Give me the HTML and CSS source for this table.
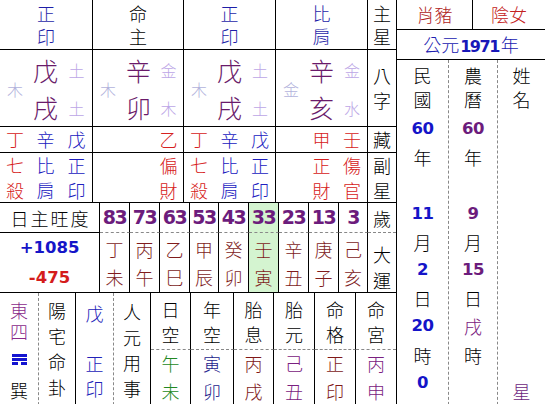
FILE: index.html
```html
<!DOCTYPE html>
<html lang="zh-Hant">
<head>
<meta charset="utf-8">
<title>八字命盤</title>
<link rel="stylesheet" href="styles.css">
</head>
<body>
<div class="chart">
  <div class="main">
    <div class="pillars">
      <div class="cell head navy">正<br>印</div>
      <div class="cell head">命<br>主</div>
      <div class="cell head navy">正<br>印</div>
      <div class="cell head navy">比<br>肩</div>
      <div class="cell head last">主<br>星</div>

      <div class="cell bazi">
        <span class="el-left">木</span>
        <span class="stem">戊</span><span class="el">土</span>
        <span class="stem b">戌</span><span class="el b">土</span>
      </div>
      <div class="cell bazi">
        <span class="el-left">木</span>
        <span class="stem">辛</span><span class="el">金</span>
        <span class="stem b">卯</span><span class="el b">木</span>
      </div>
      <div class="cell bazi">
        <span class="el-left">木</span>
        <span class="stem">戊</span><span class="el">土</span>
        <span class="stem b">戌</span><span class="el b">土</span>
      </div>
      <div class="cell bazi">
        <span class="el-left">金</span>
        <span class="stem">辛</span><span class="el">金</span>
        <span class="stem b">亥</span><span class="el b">水</span>
      </div>
      <div class="cell last side-label">八<br>字</div>

      <div class="cell trio">
        <span class="s1 red">丁</span><span class="s2 blue">辛</span><span class="s3 blue">戊</span>
      </div>
      <div class="cell trio">
        <span class="s3 red">乙</span>
      </div>
      <div class="cell trio">
        <span class="s1 red">丁</span><span class="s2 blue">辛</span><span class="s3 blue">戊</span>
      </div>
      <div class="cell trio">
        <span class="s2 red">甲</span><span class="s3 red">壬</span>
      </div>
      <div class="cell last trio-label">藏</div>

      <div class="cell trio">
        <span class="s1 red">七<br>殺</span><span class="s2 blue">比<br>肩</span><span class="s3 blue">正<br>印</span>
      </div>
      <div class="cell trio">
        <span class="s3 red">偏<br>財</span>
      </div>
      <div class="cell trio">
        <span class="s1 red">七<br>殺</span><span class="s2 blue">比<br>肩</span><span class="s3 blue">正<br>印</span>
      </div>
      <div class="cell trio">
        <span class="s2 red">正<br>財</span><span class="s3 red">傷<br>官</span>
      </div>
      <div class="cell last trio-label">副<br>星</div>
    </div>

    <div class="luck">
      <div class="cell strength">日主旺度</div>
      <div class="cell age">83</div>
      <div class="cell age">73</div>
      <div class="cell age">63</div>
      <div class="cell age">53</div>
      <div class="cell age">43</div>
      <div class="cell age now">33</div>
      <div class="cell age">23</div>
      <div class="cell age">13</div>
      <div class="cell age">3</div>
      <div class="cell last age-label">歲</div>

      <div class="cell score"><span class="plus">+1085</span><br><span class="minus">-475</span></div>
      <div class="cell pair">丁<br>未</div>
      <div class="cell pair">丙<br>午</div>
      <div class="cell pair">乙<br>巳</div>
      <div class="cell pair">甲<br>辰</div>
      <div class="cell pair">癸<br>卯</div>
      <div class="cell pair now">壬<br>寅</div>
      <div class="cell pair">辛<br>丑</div>
      <div class="cell pair">庚<br>子</div>
      <div class="cell pair">己<br>亥</div>
      <div class="cell last luck-label">大<br>運</div>
    </div>

    <div class="extra">
      <div class="cell v1 dashed-r">
        <span class="east">東<br>四</span>
        <svg class="gua" width="15" height="11" viewBox="0 0 15 11" aria-hidden="true">
          <rect x="0" y="0" width="15" height="3" fill="#1414d0"/>
          <rect x="0" y="4" width="15" height="3" fill="#1414d0"/>
          <rect x="0" y="8" width="6" height="3" fill="#1414d0"/>
          <rect x="9" y="8" width="6" height="3" fill="#1414d0"/>
        </svg>
        <span class="gua-name">巽</span>
      </div>
      <div class="cell v2">陽<br>宅<br>命<br>卦</div>
      <div class="cell v3 dashed-r">
        <span class="v3-top">戊</span>
        <span class="v3-bot">正<br>印</span>
      </div>
      <div class="cell v4">人<br>元<br>用<br>事</div>

      <div class="cell tcell">日<br>空</div>
      <div class="cell tcell">年<br>空</div>
      <div class="cell tcell">胎<br>息</div>
      <div class="cell tcell">胎<br>元</div>
      <div class="cell tcell">命<br>格</div>
      <div class="cell tcell last">命<br>宮</div>

      <div class="cell bcell green">午<br>未</div>
      <div class="cell bcell navy2">寅<br>卯</div>
      <div class="cell bcell brown">丙<br>戌</div>
      <div class="cell bcell purple">己<br>丑</div>
      <div class="cell bcell brown">正<br>印</div>
      <div class="cell bcell purple last">丙<br>申</div>
    </div>
  </div>

  <div class="side">
    <div class="side-top">
      <div class="zodiac">肖豬</div>
      <div class="gender">陰女</div>
    </div>
    <div class="year">公元<b>1971</b>年</div>
    <div class="dates">
      <div class="dcol dcol-a">
        <div class="ln-s">民</div>
        <div class="ln-s">國</div>
        <div class="ln first num blue-n">60</div>
        <div class="ln">年</div>
        <div class="ln"></div>
        <div class="ln num blue-n">11</div>
        <div class="ln">月</div>
        <div class="ln num blue-n">2</div>
        <div class="ln">日</div>
        <div class="ln num blue-n">20</div>
        <div class="ln">時</div>
        <div class="ln num blue-n">0</div>
      </div>
      <div class="dcol dcol-b">
        <div class="ln-s">農</div>
        <div class="ln-s">曆</div>
        <div class="ln first num purple-n">60</div>
        <div class="ln">年</div>
        <div class="ln"></div>
        <div class="ln num purple-n">9</div>
        <div class="ln">月</div>
        <div class="ln num purple-n">15</div>
        <div class="ln">日</div>
        <div class="ln purple">戌</div>
        <div class="ln">時</div>
      </div>
      <div class="dcol dcol-c">
        <div class="ln-s">姓</div>
        <div class="ln-s">名</div>
        <div class="ln star purple">星</div>
      </div>
    </div>
  </div>
</div>
</body>
</html>
```

FILE: styles.css
```css
html, body {
  margin: 0;
  padding: 0;
  background: #fff;
}

body {
  width: 545px;
  height: 404px;
  overflow: hidden;
  font-family: "Noto Sans CJK TC", "Noto Sans CJK SC", sans-serif;
  font-weight: 300;
  font-size: 18px;
  color: #000;
}

.chart {
  display: flex;
  width: 545px;
  height: 420px;
}

.main {
  width: 397px;
  box-sizing: border-box;
  border-right: 1px solid #000;
  display: flex;
  flex-direction: column;
}

.side {
  width: 148px;
  display: flex;
  flex-direction: column;
}

.cell {
  box-sizing: border-box;
  border-right: 1px solid #000;
  border-bottom: 1px solid #000;
  text-align: center;
  overflow: hidden;
}

.cell.last {
  border-right: none;
}

/* ---------- pillars ---------- */
.pillars {
  display: grid;
  grid-template-columns: 93px 91px 92px 92px 28px;
  grid-template-rows: 50px 77px 26px 50px;
}

.head {
  padding-top: 2px;
  line-height: 23px;
}

.navy { color: #1e1ea8; }
.red { color: #d62020; }
.blue { color: #2020c0; }

.bazi {
  display: grid;
  grid-template-columns: 30px 31px 1fr;
  grid-template-rows: 38px 37px;
  padding-top: 1px;
  align-items: center;
  justify-items: center;
}

.bazi span {
  line-height: 1;
}

.stem {
  grid-column: 2;
  font-size: 25px;
  color: #6a1a6a;
}

.el {
  grid-column: 3;
  font-size: 16px;
  color: #bca6e6;
}

.el-left {
  grid-column: 1;
  grid-row: 1 / 3;
  font-size: 16px;
  color: #b2b2dc;
}

.bazi .b {
  grid-row: 2;
}

.side-label {
  padding-top: 13px;
  line-height: 25px;
}

.trio {
  display: grid;
  grid-template-columns: 30px 31px 1fr;
  line-height: 25px;
}

.s1 { grid-column: 1; grid-row: 1; }
.s2 { grid-column: 2; grid-row: 1; }
.s3 { grid-column: 3; grid-row: 1; }

.trio-label {
  line-height: 25px;
}

/* ---------- luck ---------- */
.luck {
  display: grid;
  grid-template-columns: 100px 30px 30px 30px 29px 30px 30px 30px 30px 29px 28px;
  grid-template-rows: 30px 60px;
}

.strength {
  padding-top: 1px;
  padding-left: 2px;
  line-height: 29px;
  letter-spacing: 2px;
}

.age {
  border-bottom: 1px dashed #888;
  font-family: "DejaVu Sans", sans-serif;
  font-weight: bold;
  font-size: 19px;
  letter-spacing: -1.5px;
  line-height: 29px;
  color: #6c1c7c;
}

.age-label {
  border-bottom: 1px dashed #888;
  padding-top: 1px;
  line-height: 29px;
}

.now {
  background: #d4f4d0;
}

.score {
  font-family: "DejaVu Sans", sans-serif;
  font-weight: bold;
  font-size: 16.5px;
  line-height: 30px;
}

.plus { color: #1515c8; }
.minus { color: #d41c1c; }

.pair {
  padding-top: 2px;
  line-height: 28px;
  color: #801c1c;
}

.luck-label {
  padding-top: 8px;
  line-height: 26px;
}

/* ---------- extra ---------- */
.extra {
  flex: 1;
  display: grid;
  grid-template-columns: 39px 37px 38px 37px 40px 43px 40px 41px 41px 40px;
  grid-template-rows: 57px 1fr;
}

.extra .cell {
  border-bottom: none;
}

.extra .dashed-r {
  border-right: 1px dashed #888;
}

.v1, .v2, .v3, .v4 {
  grid-row: 1 / 3;
}

.v1 {
  padding-top: 7px;
  line-height: 21px;
}

.east {
  display: block;
  color: #8a2a8a;
}

.gua {
  display: block;
  margin: 12px auto 0;
}

.gua-name {
  display: block;
  margin-top: 15px;
}

.v2 {
  padding-top: 5px;
  line-height: 25.7px;
}

.v3 {
  padding-top: 8px;
  line-height: 25px;
  color: #2222b8;
}

.v3-top {
  display: block;
}

.v3-bot {
  display: block;
  margin-top: 25px;
}

.v4 {
  padding-top: 6px;
  line-height: 25.5px;
}

.extra .tcell {
  padding-top: 4px;
  line-height: 25px;
  border-bottom: 1px dashed #888;
}

.bcell {
  line-height: 27.5px;
}

.green { color: #228822; }
.navy2 { color: #22228c; }
.brown { color: #801818; }
.purple { color: #7a2080; }

/* ---------- side ---------- */
.side-top {
  display: flex;
  height: 30px;
  box-sizing: border-box;
  border-bottom: 1px solid #000;
}

.zodiac {
  width: 76px;
  box-sizing: border-box;
  border-right: 1px solid #000;
  line-height: 29px;
  text-align: center;
  color: #b02424;
}

.gender {
  flex: 1;
  line-height: 29px;
  text-align: center;
  color: #c42020;
}

.year {
  height: 30px;
  box-sizing: border-box;
  border-bottom: 1px solid #000;
  line-height: 29px;
  text-align: center;
  color: #2020b0;
}

.year b {
  font-family: "DejaVu Sans", sans-serif;
  font-weight: bold;
  font-size: 16px;
  letter-spacing: -1.5px;
  color: #1818b8;
  padding: 0 2px 0 1px;
}

.dates {
  flex: 1;
  display: flex;
}

.dcol {
  box-sizing: border-box;
  padding-top: 3px;
  text-align: center;
}

.dcol-a {
  width: 52px;
  border-right: 1px dashed #888;
}

.dcol-b {
  width: 49px;
  border-right: 1px dashed #888;
}

.dcol-c {
  flex: 1;
}

.ln-s {
  height: 24px;
  line-height: 24px;
}

.ln {
  height: 28.2px;
  line-height: 28.2px;
}

.ln.first {
  margin-top: 4px;
}

.num {
  font-family: "DejaVu Sans", sans-serif;
  font-weight: bold;
  font-size: 16.5px;
  letter-spacing: -0.5px;
}

.blue-n { color: #1414c8; }
.purple-n { color: #6c1c7c; }

.star {
  margin-top: 266px;
  color: #6c1c7c;
}
```
